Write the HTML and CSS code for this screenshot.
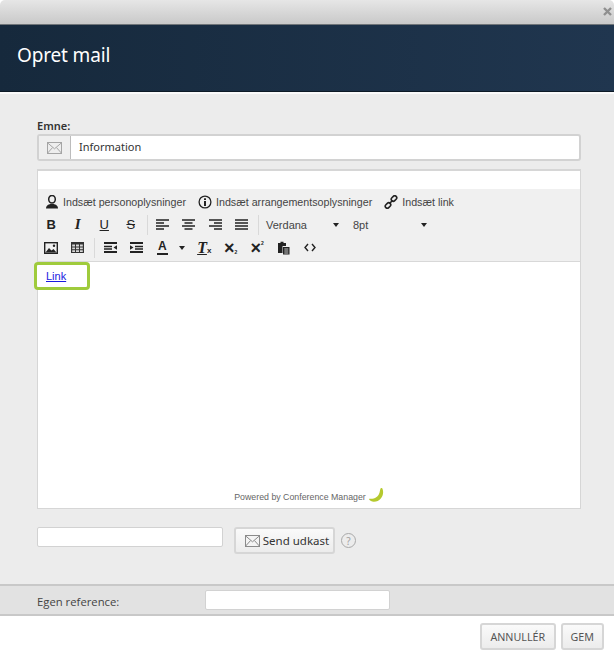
FILE: index.html
```html
<!DOCTYPE html>
<html lang="da">
<head>
<meta charset="utf-8">
<title>Opret mail</title>
<link rel="stylesheet" href="styles.css">
</head>
<body>
<div class="dialog">
  <div class="topbar"><svg class="close" width="9" height="9" viewBox="0 0 9 9"><path d="M1 1l7 7M8 1L1 8" stroke="#8f8f8f" stroke-width="2.4"/></svg></div>
  <header class="head"><h1>Opret mail</h1></header>
  <main class="body">
    <label class="lbl">Emne:</label>
    <div class="subject">
      <span class="addon"><svg width="15" height="12" viewBox="0 0 15 12"><rect x=".5" y=".5" width="14" height="11" fill="#eee" stroke="#a5a5a5"/><path d="M.5 .8l7 6 7-6M.5 11.2l5-5.6M14.5 11.2l-5-5.6" fill="none" stroke="#a5a5a5"/></svg></span>
      <span class="subject-text">Information</span>
    </div>
    <section class="editor">
      <div class="blank"></div>
      <div class="toolbar">
        <div class="row row1">
          <span class="ins ins1"><svg width="14" height="14" viewBox="0 0 14 14"><ellipse cx="7" cy="4.2" rx="3.3" ry="3.8" fill="none" stroke="#222" stroke-width="1.5"/><path d="M1 13.500c0-3 2.500-4 4.300-4.500h3.400c1.800.5 4.300 1.500 4.300 4.500z" fill="#222"/></svg>Indsæt personoplysninger</span>
          <span class="ins ins2"><svg width="14" height="14" viewBox="0 0 14 14"><circle cx="7" cy="7" r="5.900" fill="none" stroke="#222" stroke-width="1.300"/><rect x="6" y="6" width="2" height="5" fill="#222"/><rect x="6" y="3.300" width="2" height="1.700" fill="#222"/></svg>Indsæt arrangementsoplysninger</span>
          <span class="ins ins3"><svg width="14" height="14" viewBox="0 0 14 14"><g fill="none" stroke="#222" stroke-width="1.600"><rect x="7" y="1.500" width="6" height="4" rx="2" transform="rotate(-45 10 3.500)"/><rect x="1" y="8.500" width="6" height="4" rx="2" transform="rotate(-45 4 10.500)"/><path d="M5.500 8.500l3-3"/></g></svg>Indsæt link</span>
        </div>
        <div class="row row2">
          <span class="tb t-b">B</span>
          <span class="tb t-i">I</span>
          <span class="tb t-u">U</span>
          <span class="tb t-s">S</span>
          <i class="sep"></i>
          <span class="tb"><svg class="al" width="13" height="11" viewBox="0 0 13 11"><path d="M0 1h13M0 4h8M0 7h13M0 10h8"/></svg></span>
          <span class="tb"><svg class="al" width="13" height="11" viewBox="0 0 13 11"><path d="M0 1h13M2.500 4h8M0 7h13M2.500 10h8"/></svg></span>
          <span class="tb"><svg class="al" width="13" height="11" viewBox="0 0 13 11"><path d="M0 1h13M5 4h8M0 7h13M5 10h8"/></svg></span>
          <span class="tb"><svg class="al" width="13" height="11" viewBox="0 0 13 11"><path d="M0 1h13M0 4h13M0 7h13M0 10h13"/></svg></span>
          <i class="sep sep-font"></i>
          <span class="sel sel-font">Verdana<b class="caret"></b></span>
          <span class="sel sel-size">8pt<b class="caret"></b></span>
        </div>
        <div class="row row3">
          <span class="tb"><svg width="14" height="12" viewBox="0 0 14 12"><rect x=".7" y=".7" width="12.600" height="10.600" fill="none" stroke="#222" stroke-width="1.400"/><path d="M1.500 10.500l3.500-4.500 2.500 2.500 2-1.500 3 3.500z" fill="#222"/><circle cx="10" cy="3.700" r="1.200" fill="#222"/></svg></span>
          <span class="tb"><svg width="13" height="11" viewBox="0 0 13 11"><rect width="13" height="11" fill="#333"/><path d="M1.200 2.500h2.800v2H1.200zM5 2.500h3v2H5zM9 2.500h2.800v2H9zM1.200 5.500h2.800v1.700H1.200zM5 5.500h3v1.700H5zM9 5.500h2.800v1.700H9zM1.200 8.200h2.800v1.700H1.200zM5 8.200h3v1.700H5zM9 8.200h2.800v1.700H9z" fill="#d8d8d8"/></svg></span>
          <i class="sep sep-row3"></i>
          <span class="tb"><svg width="13" height="11" viewBox="0 0 13 11"><path d="M0 1h13M0 10h13" stroke="#222" stroke-width="2"/><path d="M0 4.500h8M0 7h8" stroke="#222" stroke-width="1.500"/><path d="M13 3.300v4.400L9.500 5.500z" fill="#222"/></svg></span>
          <span class="tb"><svg width="13" height="11" viewBox="0 0 13 11"><path d="M0 1h13M0 10h13" stroke="#222" stroke-width="2"/><path d="M5 4.500h8M5 7h8" stroke="#222" stroke-width="1.500"/><path d="M0 3.300v4.400l3.500-2.200z" fill="#222"/></svg></span>
          <span class="tb color"><span class="color-a">A</span><b class="caret"></b></span>
          <span class="tb t-clear"><span class="t-cl">T</span><small>x</small></span>
          <span class="tb t-x"><span class="x-base">×</span><small class="x-sub">2</small></span>
          <span class="tb t-x"><span class="x-base">×</span><small class="x-sup">2</small></span>
          <span class="tb"><svg width="13" height="14" viewBox="0 0 13 14"><path d="M1 2h2.500V.7h3V2H9v3H5.500v7H1z" fill="#222"/><rect x="6" y="6" width="6.500" height="7.500" fill="#222"/><path d="M7.300 8h4M7.300 10h4M7.300 12h4" stroke="#f0f0f0" stroke-width=".8"/></svg></span>
          <span class="tb"><svg width="12" height="9" viewBox="0 0 12 9"><path d="M4 1L1 4.500 4 8M8 1l3 3.500L8 8" fill="none" stroke="#222" stroke-width="1.400"/></svg></span>
        </div>
      </div>
      <div class="content">
        <div class="linkbox"><a href="#" class="link">Link</a></div>
        <div class="powered">Powered by Conference Manager<svg width="15" height="14" viewBox="0 0 15 14"><path d="M12.500 0c.8 0 1 .7 1.200 1.500C15.500 7 11.500 13.500 5 13.800 3 13.900 1 13 0 11.300c0-.5.500-.6 1-.5 4.500.3 8-1.500 9.500-6 .4-1.500.6-3 1-4.200.2-.4.500-.6 1-.6z" fill="#b5c92e"/></svg></div>
      </div>
    </section>
    <div class="draft">
      <span class="field draft-input"></span>
      <span class="btn send"><svg width="15" height="12" viewBox="0 0 15 12"><rect x=".5" y=".5" width="14" height="11" fill="#f4f4f4" stroke="#8a8a8a"/><path d="M.5 .8l7 6 7-6M.5 11.200l5-5.600M14.500 11.200l-5-5.600" fill="none" stroke="#8a8a8a"/></svg>Send udkast</span>
      <span class="help">?</span>
    </div>
  </main>
  <div class="refband">
    <span class="ref-label">Egen reference:</span>
    <span class="field ref-input"></span>
  </div>
  <footer class="foot">
    <span class="btn act annul">ANNULLÉR</span>
    <span class="btn act">GEM</span>
  </footer>
</div>
</body>
</html>
```
FILE: styles.css
```css
* { box-sizing: border-box; }
html, body { margin: 0; padding: 0; }
body { width: 614px; height: 658px; overflow: hidden; background: #fff; font-family: "Open Sans", sans-serif; color: #333; }
.dialog { display: flex; flex-direction: column; height: 658px; }
.topbar { height: 25px; flex: none; display: flex; justify-content: flex-end; align-items: flex-start; padding: 7px 2px 0 0; background: linear-gradient(#e6e6e6, #c9c9c9); border-bottom: 1px solid #6f7478; border-radius: 5px 5px 0 0; }
.head { height: 67px; flex: none; display: flex; align-items: center; padding-left: 17px; background: linear-gradient(90deg, #16293c, #20364f); border-bottom: 1px solid #0d1a26; }
.head h1 { margin: 0 0 6px; font: 400 19px "Noto Sans", sans-serif; color: #fff; letter-spacing: -.15px; }
.body { height: 493px; flex: none; background: #ececec; border-top: 2px solid #fafafa; padding: 26px 33px 0 37px; display: flex; flex-direction: column; }
.lbl { font: 600 11px/14px "Noto Sans", sans-serif; color: #333; height: 14px; margin-top: -1px; margin-bottom: 1px; }
.subject { height: 27px; display: flex; background: #fff; border: 2px solid #d2d2d2; border-radius: 3px; }
.addon { width: 32px; display: flex; align-items: center; justify-content: center; background: #efefef; border-right: 1px solid #bcbcbc; }
.subject-text { font: 400 11px/22px "Noto Sans", sans-serif; padding-left: 8px; color: #333; }
.editor { margin-top: 8px; height: 340px; display: flex; flex-direction: column; background: #fff; border: 2px solid #d6d6d6; border-width: 2px 1px 1px 1px; }
.blank { height: 18px; flex: none; }
.toolbar { height: 73px; flex: none; background: #f0f0f0; border-bottom: 1px solid #d8d8d8; padding-top: 1px; }
.row { height: 23px; display: flex; align-items: center; }
.row1 { padding-left: 7px; }
.ins { display: flex; align-items: center; gap: 4px; font: 400 10.700px "Liberation Sans", sans-serif; color: #444; white-space: nowrap; }
.ins1, .ins2 { margin-right: 12px; }
.tb { width: 26.500px; height: 20px; flex: none; display: flex; align-items: center; justify-content: center; font: 700 13px "Liberation Sans", sans-serif; color: #222; }
.al { stroke: #222; stroke-width: 1.700; }
.t-i { font-style: italic; font-family: "Liberation Serif", serif; font-size: 15px; }
.t-u { text-decoration: underline; font-weight: 400; }
.t-s { text-decoration: line-through; font-weight: 400; }
.sep { width: 1px; height: 20px; background: #d9d9d9; margin: 0 1px 0 3px; flex: none; }
.sep-font { margin-right: 1px; }
.sep-row3 { margin-right: 2px; }
.sel { display: flex; align-items: center; font: 400 11px "Liberation Sans", sans-serif; color: #444; padding-left: 6px; flex: none; }
.sel-font { width: 87px; }
.sel-size { width: 88px; }
.caret { width: 0; height: 0; border: 3.500px solid transparent; border-top: 4px solid #222; border-bottom: 0; margin-left: auto; margin-right: 8.500px; }
.color { width: 41px; gap: 11px; justify-content: flex-start; padding-left: 7px; }
.color .caret { margin: 0; }
.color-a { font: 700 12px/13px "Liberation Sans", sans-serif; border-bottom: 2px solid #222; padding: 0 1px; }
.t-clear { font: italic 700 16px "Liberation Serif", serif; }
.t-cl { text-decoration: underline; }
.t-clear small { font: 700 8px "Liberation Sans", sans-serif; margin-top: 6px; }
.t-x { font: 700 18px/20px "Liberation Sans", sans-serif; }
.x-base { display: block; }
.x-sub, .x-sup { font: 700 5px "Liberation Sans", sans-serif; }
.x-sub { margin-top: 9px; }
.x-sup { margin-top: -9px; }
.content { flex: 1; padding: 0 0 6px; display: flex; flex-direction: column; justify-content: space-between; }
.linkbox { width: 56px; height: 28px; margin: 0 0 0 -4px; border: 3px solid #9fcb3c; border-radius: 4px; background: #fff; padding: 2px 0 0 9px; position: relative; line-height: 14px; }
.link { font: 400 11px/14px "Liberation Sans", sans-serif; color: #1a1ae0; }
.powered { display: flex; align-items: flex-end; justify-content: center; gap: 3px; font: 400 8.800px "Liberation Sans", sans-serif; color: #666; }
.draft { margin-top: 18px; display: flex; align-items: center; }
.field { display: block; background: #fff; border: 1px solid #d2d2d2; border-radius: 2px; }
.draft-input { width: 186px; height: 20px; margin-right: 11px; margin-top: -7px; }
.btn { display: flex; align-items: center; justify-content: center; background: linear-gradient(#fafafa, #ececec); border: 2px solid #d6d6d6; border-radius: 3px; }
.send { width: 101px; height: 27px; gap: 3px; padding-left: 5px; font: 400 11.500px "Noto Sans", sans-serif; color: #333; }
.help { width: 15px; height: 15px; margin-left: 6px; border: 1.500px solid #a8a8a8; border-radius: 50%; display: flex; align-items: center; justify-content: center; font: 400 10px "Noto Sans", sans-serif; color: #a0a0a0; }
.refband { height: 32px; flex: none; display: flex; align-items: center; background: #e2e2e2; border-top: 2px solid #c8c8c8; border-bottom: 2px solid #c8c8c8; padding-left: 37px; margin-top: -1px; }
.ref-label { width: 168px; font: 400 11.300px "Open Sans", sans-serif; color: #444; padding-top: 2px; }
.ref-input { width: 185px; height: 20px; }
.foot { flex: 1; display: flex; justify-content: flex-end; align-items: flex-start; gap: 5px; padding: 7px 10px 0 0; }
.act { height: 27px; padding: 0 8px; font: 400 10.700px "Noto Sans", sans-serif; color: #555; }
.annul { padding: 0 8.500px; }
```
